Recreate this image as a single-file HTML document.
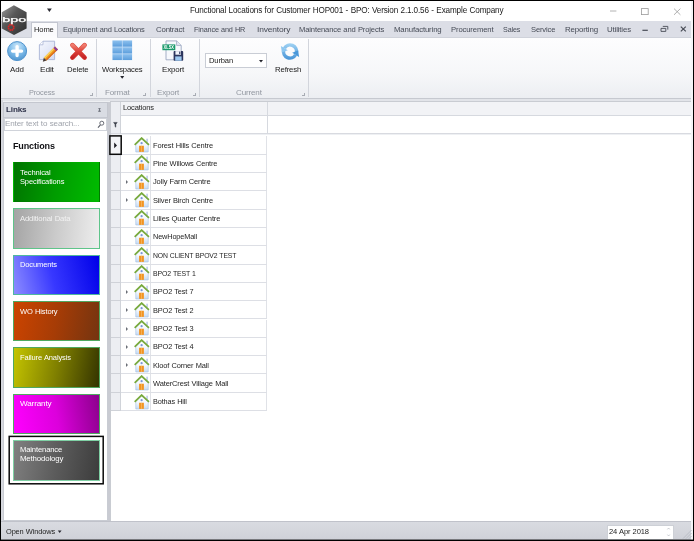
<!DOCTYPE html>
<html><head><meta charset="utf-8"><title>Functional Locations</title>
<style>
*{box-sizing:border-box;margin:0;padding:0}
html,body{width:694px;height:541px;overflow:hidden;background:#000}
body{font-family:"Liberation Sans","DejaVu Sans",sans-serif;font-size:8.3px;color:#1e1e1e;position:relative}
#win{position:absolute;left:1px;top:1px;width:692px;height:538.6px;background:#fff;overflow:hidden}
#pg{position:absolute;left:-1px;top:-1px;width:694px;height:541px}
#pg div,#pg i,#pg span,#pg svg{position:absolute;display:block}
.t{white-space:nowrap;line-height:10px;height:10px;transform-origin:0 0;letter-spacing:-0.15px;word-spacing:0.35px}
#ov{left:0;top:0;width:694px;height:541px;will-change:transform}
#rframe{left:690.8px;top:1px;width:2.2px;height:539px;background:#f4f4f7}
#focusbg{left:110px;top:136px;width:11px;height:18px;background:#f3f4f6}
#bshade{left:0;top:539px;width:694px;height:1px;background:rgba(0,0,0,.42)}
#tabbar{left:1px;top:21.4px;width:692px;height:15.2px;background:#dcdee6}
#home{left:30.8px;top:22.4px;width:27.2px;height:15px;background:#fbfbfd;border:1px solid #c3c6d0;border-bottom:none}
#ribbon{left:1px;top:36.6px;width:692px;height:62px;background:linear-gradient(#fdfdfe 0%,#f6f7f9 60%,#eceef2 100%);border-top:1px solid #cfd2da;border-bottom:1px solid #c6c9d0}
#home2{left:31.8px;top:36px;width:25.2px;height:2px;background:#fcfcfd}
.gcap{top:86.5px;height:11px;background:rgba(228,231,237,.55)}
.gsep{top:39px;width:1px;height:58px;background:#d2d5dc}
.launch{top:93.4px;width:2.8px;height:2.8px;border-right:0.9px solid #a8acb4;border-bottom:0.9px solid #a8acb4}
#gap{left:1px;top:98.6px;width:692px;height:5px;background:linear-gradient(#e2e4e9 0,#e2e4e9 2px,#eef0f3 2px)}
#links{left:3px;top:102px;width:105px;height:419px;background:#fff;border:1px solid #c9ccd3}
#linkshdr{left:3px;top:102px;width:105px;height:16px;background:#d9dce3;border:1px solid #c4c7cf}
#search{left:3.5px;top:118px;width:103.5px;height:12.5px;border:1px solid #d0d3da;background:#fff}
.tile{left:12.9px;width:87.2px;height:40.6px;border:1px solid transparent}
#sel{left:8.5px;top:435.6px;width:95.4px;height:49px;border:1.7px solid #0a0a0a}
#lmargin{left:1px;top:100px;width:2px;height:440px;background:#d6d8de}
#splitter{left:108px;top:102px;width:2px;height:421px;background:#c9cbd2}
#grid{left:110px;top:101px;width:584px;height:422px;background:#fff;border-top:1px solid #c9ccd2;border-left:1px solid #c9ccd2}
#ghdrbg{left:111px;top:102px;width:582px;height:14px;background:#f2f3f6;border-bottom:1px solid #d6d9df}
#indcol{left:111px;top:102px;width:10px;height:309px;background:#eceef2;border-right:1px solid #d0d3d9}
#gfline{left:110.6px;top:133px;width:583px;height:2px;background:linear-gradient(#d8dae0 0,#d8dae0 1px,#eef0f3 1px)}
#gcol{left:266.6px;top:102px;width:1px;height:32px;background:#d6d9df}
#gcol0{left:120.4px;top:102px;width:1px;height:32px;background:#d0d3d9}
.row{left:110.6px;width:156.8px;height:18.33px;border-bottom:1px solid #dddfe5}
.row::before{content:"";position:absolute;left:0;top:0;width:10.4px;height:100%;border-bottom:1px solid #cfd2d8}
.house{left:23.4px;top:0.9px}
.cell{left:39.4px;top:0;width:117.4px;height:100%;border-left:1px solid #e0e2e7;border-right:1px solid #e0e2e7}
.exp{left:15.2px;top:7.2px;width:0;height:0;border-left:2.6px solid #6a6e76;border-top:2px solid transparent;border-bottom:2px solid transparent}
#focus{left:109.2px;top:135.1px;width:12.8px;height:19.7px;border:1.6px solid #0a0a0a;background:#f3f4f6}
#focus i{left:3.2px;top:6.2px;width:0;height:0;border-left:3px solid #222;border-top:2.6px solid transparent;border-bottom:2.6px solid transparent}
#status{left:1px;top:521px;width:692px;height:19px;background:linear-gradient(#d9dbe1,#cfd1d8);border-top:1px solid #c0c2ca}
#date{left:607px;top:524.8px;width:67px;height:15px;background:#fff;border:1px solid #cdd0d6}
#combo{left:205.2px;top:53.3px;width:61.4px;height:15.2px;background:#fff;border:1px solid #c9cdd5}
.dd{width:0;height:0;border-top:2.4px solid #222;border-left:2px solid transparent;border-right:2px solid transparent}
</style></head><body>
<svg width="0" height="0" style="position:absolute"><defs>
<linearGradient id="hw" x1="0" y1="0" x2="0" y2="1"><stop offset="0" stop-color="#ffffff"/><stop offset="0.5" stop-color="#f4f8fd"/><stop offset="1" stop-color="#c6daf2"/></linearGradient>

</defs></svg>
<div id="win"><div id="pg">
<div id="tabbar"></div>
<div id="ribbon"></div>
<div id="home"></div><div id="home2"></div>
<div id="gap"></div>
<!-- group captions + separators -->
<div class="gsep" style="left:96.4px"></div><div class="gsep" style="left:149.6px"></div><div class="gsep" style="left:199.4px"></div><div class="gsep" style="left:308px"></div>
<div class="launch" style="left:90.4px"></div><div class="launch" style="left:143.4px"></div><div class="launch" style="left:193px"></div><div class="launch" style="left:302.4px"></div>
<div id="combo"></div>
<div id="lmargin"></div>
<div id="links"></div>
<div id="linkshdr"></div>
<div id="search"></div>
<div class="tile" style="top:161.7px;background:linear-gradient(100deg,#007400 0%,#009c00 50%,#00bc00 100%);border-color:transparent"></div><div class="tile" style="top:208.1px;background:linear-gradient(95deg,#a4a4a4 0%,#cbcbcb 50%,#eeeeee 100%);border-color:#5fc48a"></div><div class="tile" style="top:254.5px;background:linear-gradient(75deg,#8c8cff 0%,#3838ff 45%,#0000e8 100%);border-color:#4fb8a0"></div><div class="tile" style="top:300.9px;background:linear-gradient(100deg,#cc4400 0%,#a63c06 50%,#743410 100%);border-color:#50a860"></div><div class="tile" style="top:347.3px;background:linear-gradient(100deg,#c4c400 0%,#808000 50%,#343400 100%);border-color:#50a860"></div><div class="tile" style="top:393.7px;background:linear-gradient(80deg,#ff00ff 0%,#dc00dc 50%,#8c008c 100%);border-color:#50a860"></div><div class="tile" style="top:440.1px;background:linear-gradient(100deg,#808080 0%,#5c5c5c 50%,#3c3c3c 100%);border-color:#7fd0a4"></div>
<div id="splitter"></div>
<div id="grid"></div>
<div id="ghdrbg"></div>
<div id="indcol"></div>
<div id="gfline"></div><div id="gcol"></div><div id="gcol0"></div>
<div class="row" style="top:136.20px"><svg class="house" width="16" height="16" viewBox="0 0 17 17"><rect x="13" y="1.8" width="1.9" height="4" fill="#c4d0ea"/><path d="M1.9 8.2 L8.1 2 L15.1 8.2 L15.1 15.9 L1.9 15.9 Z" fill="url(#hw)" stroke="#a9c3e6" stroke-width="0.7"/><rect x="5.4" y="9.3" width="5.1" height="6.5" fill="#f29422"/><path d="M7.95 9.3 V15.8" stroke="#f8c070" stroke-width="0.7"/><circle cx="8.1" cy="6.6" r="1.2" fill="#7a96d6"/><path d="M0.7 8.3 L8.1 1.1 L15.9 8.3" fill="none" stroke="#78aa3c" stroke-width="1.8"/></svg><i class="cell"></i></div>
<div class="row" style="top:154.53px"><svg class="house" width="16" height="16" viewBox="0 0 17 17"><rect x="13" y="1.8" width="1.9" height="4" fill="#c4d0ea"/><path d="M1.9 8.2 L8.1 2 L15.1 8.2 L15.1 15.9 L1.9 15.9 Z" fill="url(#hw)" stroke="#a9c3e6" stroke-width="0.7"/><rect x="5.4" y="9.3" width="5.1" height="6.5" fill="#f29422"/><path d="M7.95 9.3 V15.8" stroke="#f8c070" stroke-width="0.7"/><circle cx="8.1" cy="6.6" r="1.2" fill="#7a96d6"/><path d="M0.7 8.3 L8.1 1.1 L15.9 8.3" fill="none" stroke="#78aa3c" stroke-width="1.8"/></svg><i class="cell"></i></div>
<div class="row" style="top:172.86px"><i class="exp"></i><svg class="house" width="16" height="16" viewBox="0 0 17 17"><rect x="13" y="1.8" width="1.9" height="4" fill="#c4d0ea"/><path d="M1.9 8.2 L8.1 2 L15.1 8.2 L15.1 15.9 L1.9 15.9 Z" fill="url(#hw)" stroke="#a9c3e6" stroke-width="0.7"/><rect x="5.4" y="9.3" width="5.1" height="6.5" fill="#f29422"/><path d="M7.95 9.3 V15.8" stroke="#f8c070" stroke-width="0.7"/><circle cx="8.1" cy="6.6" r="1.2" fill="#7a96d6"/><path d="M0.7 8.3 L8.1 1.1 L15.9 8.3" fill="none" stroke="#78aa3c" stroke-width="1.8"/></svg><i class="cell"></i></div>
<div class="row" style="top:191.19px"><i class="exp"></i><svg class="house" width="16" height="16" viewBox="0 0 17 17"><rect x="13" y="1.8" width="1.9" height="4" fill="#c4d0ea"/><path d="M1.9 8.2 L8.1 2 L15.1 8.2 L15.1 15.9 L1.9 15.9 Z" fill="url(#hw)" stroke="#a9c3e6" stroke-width="0.7"/><rect x="5.4" y="9.3" width="5.1" height="6.5" fill="#f29422"/><path d="M7.95 9.3 V15.8" stroke="#f8c070" stroke-width="0.7"/><circle cx="8.1" cy="6.6" r="1.2" fill="#7a96d6"/><path d="M0.7 8.3 L8.1 1.1 L15.9 8.3" fill="none" stroke="#78aa3c" stroke-width="1.8"/></svg><i class="cell"></i></div>
<div class="row" style="top:209.52px"><svg class="house" width="16" height="16" viewBox="0 0 17 17"><rect x="13" y="1.8" width="1.9" height="4" fill="#c4d0ea"/><path d="M1.9 8.2 L8.1 2 L15.1 8.2 L15.1 15.9 L1.9 15.9 Z" fill="url(#hw)" stroke="#a9c3e6" stroke-width="0.7"/><rect x="5.4" y="9.3" width="5.1" height="6.5" fill="#f29422"/><path d="M7.95 9.3 V15.8" stroke="#f8c070" stroke-width="0.7"/><circle cx="8.1" cy="6.6" r="1.2" fill="#7a96d6"/><path d="M0.7 8.3 L8.1 1.1 L15.9 8.3" fill="none" stroke="#78aa3c" stroke-width="1.8"/></svg><i class="cell"></i></div>
<div class="row" style="top:227.85px"><svg class="house" width="16" height="16" viewBox="0 0 17 17"><rect x="13" y="1.8" width="1.9" height="4" fill="#c4d0ea"/><path d="M1.9 8.2 L8.1 2 L15.1 8.2 L15.1 15.9 L1.9 15.9 Z" fill="url(#hw)" stroke="#a9c3e6" stroke-width="0.7"/><rect x="5.4" y="9.3" width="5.1" height="6.5" fill="#f29422"/><path d="M7.95 9.3 V15.8" stroke="#f8c070" stroke-width="0.7"/><circle cx="8.1" cy="6.6" r="1.2" fill="#7a96d6"/><path d="M0.7 8.3 L8.1 1.1 L15.9 8.3" fill="none" stroke="#78aa3c" stroke-width="1.8"/></svg><i class="cell"></i></div>
<div class="row" style="top:246.18px"><svg class="house" width="16" height="16" viewBox="0 0 17 17"><rect x="13" y="1.8" width="1.9" height="4" fill="#c4d0ea"/><path d="M1.9 8.2 L8.1 2 L15.1 8.2 L15.1 15.9 L1.9 15.9 Z" fill="url(#hw)" stroke="#a9c3e6" stroke-width="0.7"/><rect x="5.4" y="9.3" width="5.1" height="6.5" fill="#f29422"/><path d="M7.95 9.3 V15.8" stroke="#f8c070" stroke-width="0.7"/><circle cx="8.1" cy="6.6" r="1.2" fill="#7a96d6"/><path d="M0.7 8.3 L8.1 1.1 L15.9 8.3" fill="none" stroke="#78aa3c" stroke-width="1.8"/></svg><i class="cell"></i></div>
<div class="row" style="top:264.51px"><svg class="house" width="16" height="16" viewBox="0 0 17 17"><rect x="13" y="1.8" width="1.9" height="4" fill="#c4d0ea"/><path d="M1.9 8.2 L8.1 2 L15.1 8.2 L15.1 15.9 L1.9 15.9 Z" fill="url(#hw)" stroke="#a9c3e6" stroke-width="0.7"/><rect x="5.4" y="9.3" width="5.1" height="6.5" fill="#f29422"/><path d="M7.95 9.3 V15.8" stroke="#f8c070" stroke-width="0.7"/><circle cx="8.1" cy="6.6" r="1.2" fill="#7a96d6"/><path d="M0.7 8.3 L8.1 1.1 L15.9 8.3" fill="none" stroke="#78aa3c" stroke-width="1.8"/></svg><i class="cell"></i></div>
<div class="row" style="top:282.84px"><i class="exp"></i><svg class="house" width="16" height="16" viewBox="0 0 17 17"><rect x="13" y="1.8" width="1.9" height="4" fill="#c4d0ea"/><path d="M1.9 8.2 L8.1 2 L15.1 8.2 L15.1 15.9 L1.9 15.9 Z" fill="url(#hw)" stroke="#a9c3e6" stroke-width="0.7"/><rect x="5.4" y="9.3" width="5.1" height="6.5" fill="#f29422"/><path d="M7.95 9.3 V15.8" stroke="#f8c070" stroke-width="0.7"/><circle cx="8.1" cy="6.6" r="1.2" fill="#7a96d6"/><path d="M0.7 8.3 L8.1 1.1 L15.9 8.3" fill="none" stroke="#78aa3c" stroke-width="1.8"/></svg><i class="cell"></i></div>
<div class="row" style="top:301.17px"><i class="exp"></i><svg class="house" width="16" height="16" viewBox="0 0 17 17"><rect x="13" y="1.8" width="1.9" height="4" fill="#c4d0ea"/><path d="M1.9 8.2 L8.1 2 L15.1 8.2 L15.1 15.9 L1.9 15.9 Z" fill="url(#hw)" stroke="#a9c3e6" stroke-width="0.7"/><rect x="5.4" y="9.3" width="5.1" height="6.5" fill="#f29422"/><path d="M7.95 9.3 V15.8" stroke="#f8c070" stroke-width="0.7"/><circle cx="8.1" cy="6.6" r="1.2" fill="#7a96d6"/><path d="M0.7 8.3 L8.1 1.1 L15.9 8.3" fill="none" stroke="#78aa3c" stroke-width="1.8"/></svg><i class="cell"></i></div>
<div class="row" style="top:319.50px"><i class="exp"></i><svg class="house" width="16" height="16" viewBox="0 0 17 17"><rect x="13" y="1.8" width="1.9" height="4" fill="#c4d0ea"/><path d="M1.9 8.2 L8.1 2 L15.1 8.2 L15.1 15.9 L1.9 15.9 Z" fill="url(#hw)" stroke="#a9c3e6" stroke-width="0.7"/><rect x="5.4" y="9.3" width="5.1" height="6.5" fill="#f29422"/><path d="M7.95 9.3 V15.8" stroke="#f8c070" stroke-width="0.7"/><circle cx="8.1" cy="6.6" r="1.2" fill="#7a96d6"/><path d="M0.7 8.3 L8.1 1.1 L15.9 8.3" fill="none" stroke="#78aa3c" stroke-width="1.8"/></svg><i class="cell"></i></div>
<div class="row" style="top:337.83px"><i class="exp"></i><svg class="house" width="16" height="16" viewBox="0 0 17 17"><rect x="13" y="1.8" width="1.9" height="4" fill="#c4d0ea"/><path d="M1.9 8.2 L8.1 2 L15.1 8.2 L15.1 15.9 L1.9 15.9 Z" fill="url(#hw)" stroke="#a9c3e6" stroke-width="0.7"/><rect x="5.4" y="9.3" width="5.1" height="6.5" fill="#f29422"/><path d="M7.95 9.3 V15.8" stroke="#f8c070" stroke-width="0.7"/><circle cx="8.1" cy="6.6" r="1.2" fill="#7a96d6"/><path d="M0.7 8.3 L8.1 1.1 L15.9 8.3" fill="none" stroke="#78aa3c" stroke-width="1.8"/></svg><i class="cell"></i></div>
<div class="row" style="top:356.16px"><i class="exp"></i><svg class="house" width="16" height="16" viewBox="0 0 17 17"><rect x="13" y="1.8" width="1.9" height="4" fill="#c4d0ea"/><path d="M1.9 8.2 L8.1 2 L15.1 8.2 L15.1 15.9 L1.9 15.9 Z" fill="url(#hw)" stroke="#a9c3e6" stroke-width="0.7"/><rect x="5.4" y="9.3" width="5.1" height="6.5" fill="#f29422"/><path d="M7.95 9.3 V15.8" stroke="#f8c070" stroke-width="0.7"/><circle cx="8.1" cy="6.6" r="1.2" fill="#7a96d6"/><path d="M0.7 8.3 L8.1 1.1 L15.9 8.3" fill="none" stroke="#78aa3c" stroke-width="1.8"/></svg><i class="cell"></i></div>
<div class="row" style="top:374.49px"><svg class="house" width="16" height="16" viewBox="0 0 17 17"><rect x="13" y="1.8" width="1.9" height="4" fill="#c4d0ea"/><path d="M1.9 8.2 L8.1 2 L15.1 8.2 L15.1 15.9 L1.9 15.9 Z" fill="url(#hw)" stroke="#a9c3e6" stroke-width="0.7"/><rect x="5.4" y="9.3" width="5.1" height="6.5" fill="#f29422"/><path d="M7.95 9.3 V15.8" stroke="#f8c070" stroke-width="0.7"/><circle cx="8.1" cy="6.6" r="1.2" fill="#7a96d6"/><path d="M0.7 8.3 L8.1 1.1 L15.9 8.3" fill="none" stroke="#78aa3c" stroke-width="1.8"/></svg><i class="cell"></i></div>
<div class="row" style="top:392.82px"><svg class="house" width="16" height="16" viewBox="0 0 17 17"><rect x="13" y="1.8" width="1.9" height="4" fill="#c4d0ea"/><path d="M1.9 8.2 L8.1 2 L15.1 8.2 L15.1 15.9 L1.9 15.9 Z" fill="url(#hw)" stroke="#a9c3e6" stroke-width="0.7"/><rect x="5.4" y="9.3" width="5.1" height="6.5" fill="#f29422"/><path d="M7.95 9.3 V15.8" stroke="#f8c070" stroke-width="0.7"/><circle cx="8.1" cy="6.6" r="1.2" fill="#7a96d6"/><path d="M0.7 8.3 L8.1 1.1 L15.9 8.3" fill="none" stroke="#78aa3c" stroke-width="1.8"/></svg><i class="cell"></i></div>
<div id="focusbg"></div>
<div id="status"></div>
<div id="date"></div>
<div id="ov">
<div id="rframe"></div>
<div id="bshade"></div>
<svg style="left:0;top:0" width="694" height="541" viewBox="0 0 694 541">
<rect x="9.2" y="436.4" width="94" height="47.4" fill="none" stroke="#0a0a0a" stroke-width="1.5"/>
<rect x="109.9" y="135.9" width="11.3" height="18.4" fill="none" stroke="#0a0a0a" stroke-width="1.5"/>
<path d="M114.2 142.6 L117 145.4 L114.2 148.2 Z" fill="#1c1c22"/>
<path d="M47 8.4 H51.8 L49.4 12 Z" fill="#2a2a32"/>
<path d="M120.2 76 H124.2 L122.2 78.7 Z" fill="#22222a"/>
<path d="M259 60 H263 L261 62.6 Z" fill="#22222a"/>
<path d="M57.8 530.6 H61.6 L59.7 533.1 Z" fill="#2a2a32"/>
</svg>
<!-- logo -->
<svg style="left:0;top:3px" width="30" height="34" viewBox="0 3 30 34">
<defs><linearGradient id="lg1" x1="0" y1="0" x2="1" y2="1"><stop offset="0" stop-color="#9c9c9c"/><stop offset="0.4" stop-color="#585858"/><stop offset="1" stop-color="#2e2e2e"/></linearGradient></defs>
<path d="M13.9 5.2 L26.6 12.3 L26.6 28.4 L14 34.9 L1.8 28.4 L1.8 12.3 Z" fill="url(#lg1)"/>
<circle cx="11.1" cy="27.4" r="2.7" fill="none" stroke="#dc2626" stroke-width="1.7" stroke-dasharray="1.6 0.5"/>
<text x="2.3" y="21.9" font-family="Liberation Sans, sans-serif" font-size="6.8" fill="#ffffff" stroke="#ffffff" stroke-width="0.25" textLength="23.8" lengthAdjust="spacingAndGlyphs">bpo</text>
</svg>
<!-- Add -->
<svg style="left:6px;top:39.6px" width="22" height="22" viewBox="0 0 22 22">
<defs><radialGradient id="ag" cx="0.5" cy="0.25" r="0.8"><stop offset="0" stop-color="#cfe8fa"/><stop offset="0.5" stop-color="#80bdea"/><stop offset="1" stop-color="#4a90cc"/></radialGradient></defs>
<circle cx="11.1" cy="11.1" r="9.5" fill="url(#ag)" stroke="#4f92cc" stroke-width="1"/>
<path d="M11.1 6.6 V15.6 M6.6 11.1 H15.6" stroke="#fff" stroke-width="3.3" stroke-linecap="round" fill="none"/>
</svg>
<!-- Edit -->
<svg style="left:38px;top:39.6px" width="22" height="22" viewBox="0 0 22 22">
<defs><linearGradient id="pg1" x1="0" y1="0" x2="1" y2="1"><stop offset="0" stop-color="#f6f8fe"/><stop offset="1" stop-color="#d3daf2"/></linearGradient></defs>
<path d="M5 1.2 H16.6 V19.6 H1.4 V4.8 Z" fill="url(#pg1)" stroke="#a9b4d6" stroke-width="0.9"/>
<path d="M5 1.2 V4.8 H1.4" fill="#fff" stroke="#a9b4d6" stroke-width="0.8"/>
<path d="M17.0 6.6 L19.9 9.5 L8.6 20.6 L5.8 17.8 Z" fill="#f0981c"/>
<path d="M17.0 6.6 L18.0 7.6 L6.8 18.8 L5.8 17.8 Z" fill="#fbd45c"/>
<path d="M19.0 8.6 L19.9 9.5 L8.6 20.6 L7.7 19.7 Z" fill="#d86a20"/>
<path d="M17.0 6.6 L19.9 9.5 L18.4 11.0 L15.5 8.1 Z" fill="#8a3aa0"/>
<path d="M5.8 17.8 L8.6 20.6 L4.8 21.8 Z" fill="#4a3c34"/>
</svg>
<!-- Delete -->
<svg style="left:68px;top:40.6px" width="21" height="21" viewBox="0 0 21 21">
<defs><linearGradient id="dg" x1="0" y1="0" x2="0" y2="1"><stop offset="0" stop-color="#f07c6e"/><stop offset="0.5" stop-color="#dc4038"/><stop offset="1" stop-color="#c42426"/></linearGradient></defs>
<path d="M4.4 4.2 L16.6 16.6 M16.6 4.2 L4.4 16.6" stroke="#d8483e" stroke-width="4.6" stroke-linecap="round" fill="none"/>
<path d="M4.4 4.2 L16.6 16.6 M16.6 4.2 L4.4 16.6" stroke="url(#dg)" stroke-width="3.6" stroke-linecap="round" fill="none"/>
</svg>
<!-- Workspaces -->
<svg style="left:111.8px;top:40.2px" width="21" height="21" viewBox="0 0 21 21">
<defs><linearGradient id="wg" x1="0" y1="0" x2="0" y2="1"><stop offset="0" stop-color="#8cc0ee"/><stop offset="1" stop-color="#5c9edc"/></linearGradient></defs>
<rect x="0.4" y="0.4" width="19.8" height="19.8" fill="#c2dcf6"/>
<g fill="url(#wg)"><rect x="0.6" y="0.6" width="9.3" height="6"/><rect x="10.7" y="0.6" width="9.3" height="6"/><rect x="0.6" y="7.4" width="9.3" height="6"/><rect x="10.7" y="7.4" width="9.3" height="6"/><rect x="0.6" y="14.2" width="9.3" height="5.8"/><rect x="10.7" y="14.2" width="9.3" height="5.8"/></g>
</svg>
<!-- Export -->
<svg style="left:161px;top:39.6px" width="24" height="22" viewBox="0 0 24 22">
<path d="M5 0.9 H15.6 L20.2 5.4 V19.8 H5 Z" fill="#f6f8fc" stroke="#9aa6c0" stroke-width="0.9"/>
<path d="M15.6 0.9 V5.4 H20.2" fill="#e4e9f4" stroke="#9aa6c0" stroke-width="0.8"/>
<rect x="1.4" y="4.4" width="12.9" height="5.8" fill="#18996a"/>
<text x="2.6" y="8.9" font-family="Liberation Sans, sans-serif" font-size="4.6" font-weight="bold" fill="#ffffff" textLength="10.4" lengthAdjust="spacingAndGlyphs">XLSX</text>
<rect x="12.6" y="11.1" width="9.6" height="9.6" rx="0.8" fill="#2c365e"/>
<rect x="14.4" y="11.1" width="5.6" height="3.6" fill="#f2f4fa"/>
<rect x="14.2" y="16.4" width="6.4" height="4.3" fill="#9cc8f0"/>
<rect x="18.2" y="11.6" width="1.2" height="2.4" fill="#2c365e"/>
</svg>
<!-- Refresh -->
<svg style="left:277.6px;top:40.6px" width="24" height="21" viewBox="0 0 24 21">
<defs><linearGradient id="rg" gradientUnits="userSpaceOnUse" x1="0" y1="1" x2="0" y2="20"><stop offset="0" stop-color="#a8d8f6"/><stop offset="1" stop-color="#3f8ed4"/></linearGradient></defs>
<g fill="none" stroke="url(#rg)" stroke-width="3.5">
<path d="M18.28 12.18 A6.5 6.5 0 0 0 6.37 7.25"/>
<path d="M5.72 8.82 A6.5 6.5 0 0 0 17.63 13.75"/>
</g>
<path d="M2.9 5.0 L9.8 9.2 L3.9 11.6 Z" fill="#8cc6f0"/>
<path d="M21.1 16.0 L14.2 11.8 L20.1 9.4 Z" fill="#4a98da"/>
</svg>
<!-- window controls -->
<svg style="left:606px;top:5px" width="80" height="13" viewBox="606 5 80 13" fill="none">
<path d="M610 11 H616.4" stroke="#a0a0a0" stroke-width="0.8"/>
<rect x="641.6" y="8.6" width="6.6" height="6" stroke="#9a9a9a" stroke-width="0.8"/>
<path d="M674 8.6 L680.4 14.8 M680.4 8.6 L674 14.8" stroke="#9a9a9a" stroke-width="0.8"/>
</svg>
<svg style="left:640px;top:24px" width="50" height="10" viewBox="640 24 50 10" fill="none">
<path d="M642.4 30.3 H647.8" stroke="#484c56" stroke-width="1.2"/>
<path d="M662.8 26.4 H667.8 V29.6 M661 28.4 H665.8 V31.4 H661 Z" stroke="#484c56" stroke-width="0.9"/>
<path d="M680.8 26.6 L685.8 31.4 M685.8 26.6 L680.8 31.4" stroke="#484c56" stroke-width="1.2"/>
</svg>
<!-- pin + magnifier + filter -->
<svg style="left:96px;top:106px" width="10" height="24" viewBox="96 106 10 24" fill="none">
<path d="M98.4 108.6 H100.6 M99.5 108.6 V111.6 M98 111.2 H101" stroke="#6a6e78" stroke-width="0.9"/>
<circle cx="101.8" cy="123.2" r="2" stroke="#5a5e68" stroke-width="0.9"/>
<path d="M100.4 124.8 L98 127.6" stroke="#5a5e68" stroke-width="1.1"/>
</svg>
<svg style="left:112px;top:120px" width="8" height="9" viewBox="112 120 8 9">
<path d="M113.6 122.4 H117.2 L115.8 124.4 V127.2 L115 126.6 V124.4 Z" fill="#3a3e48" stroke="#3a3e48" stroke-width="0.5"/>
</svg>
<!-- spin + grip -->
<svg style="left:664px;top:524px" width="30" height="16" viewBox="664 524 30 16" fill="none">
<path d="M667.4 529.4 L668.6 528 L669.8 529.4 M667.4 534.6 L668.6 536 L669.8 534.6" stroke="#b4b8c0" stroke-width="0.7"/>
<path d="M691.6 530 L683 538.6 M691.6 533 L686 538.6 M691.6 536 L689 538.6" stroke="#b8bcc4" stroke-width="0.9"/>
</svg>

<span class="t" style="left:190.35px;top:5.09px;font-size:8.4px;transform:scaleX(0.9730);color:#1a1a1a;">Functional Locations for Customer HOP001 - BPO: Version 2.1.0.56 - Example Company</span>
<span class="t" style="left:33.55px;top:25.16px;font-size:7.9px;transform:scaleX(0.9610);color:#1e1e1e;">Home</span>
<span class="t" style="left:63.35px;top:25.16px;font-size:7.9px;transform:scaleX(0.9461);color:#464b56;">Equipment and Locations</span>
<span class="t" style="left:155.85px;top:25.16px;font-size:7.9px;transform:scaleX(0.9870);color:#464b56;">Contract</span>
<span class="t" style="left:194.25px;top:25.16px;font-size:7.9px;transform:scaleX(0.9198);color:#464b56;">Finance and HR</span>
<span class="t" style="left:256.85px;top:25.16px;font-size:7.9px;transform:scaleX(1.0685);color:#464b56;">Inventory</span>
<span class="t" style="left:299.25px;top:25.16px;font-size:7.9px;transform:scaleX(0.9650);color:#464b56;">Maintenance and Projects</span>
<span class="t" style="left:394.35px;top:25.16px;font-size:7.9px;transform:scaleX(0.9894);color:#464b56;">Manufacturing</span>
<span class="t" style="left:451.05px;top:25.16px;font-size:7.9px;transform:scaleX(0.9752);color:#464b56;">Procurement</span>
<span class="t" style="left:503.35px;top:25.16px;font-size:7.9px;transform:scaleX(0.9086);color:#464b56;">Sales</span>
<span class="t" style="left:530.55px;top:25.16px;font-size:7.9px;transform:scaleX(0.9600);color:#464b56;">Service</span>
<span class="t" style="left:564.55px;top:25.16px;font-size:7.9px;transform:scaleX(1.0023);color:#464b56;">Reporting</span>
<span class="t" style="left:606.75px;top:25.16px;font-size:7.9px;transform:scaleX(0.9941);color:#464b56;">Utilities</span>
<span class="t" style="left:9.55px;top:64.56px;font-size:7.9px;transform:scaleX(1.0114);color:#1a1a1a;">Add</span>
<span class="t" style="left:40.45px;top:64.56px;font-size:7.9px;transform:scaleX(1.0570);color:#1a1a1a;">Edit</span>
<span class="t" style="left:66.55px;top:64.56px;font-size:7.9px;transform:scaleX(0.9786);color:#1a1a1a;">Delete</span>
<span class="t" style="left:101.85px;top:64.56px;font-size:7.9px;transform:scaleX(0.9706);color:#1a1a1a;">Workspaces</span>
<span class="t" style="left:162.15px;top:64.56px;font-size:7.9px;transform:scaleX(1.0065);color:#1a1a1a;">Export</span>
<span class="t" style="left:275.15px;top:64.56px;font-size:7.9px;transform:scaleX(0.9871);color:#1a1a1a;">Refresh</span>
<span class="t" style="left:29.15px;top:87.76px;font-size:7.9px;transform:scaleX(0.9378);color:#9297a0;">Process</span>
<span class="t" style="left:104.85px;top:87.76px;font-size:7.9px;transform:scaleX(1.0188);color:#9297a0;">Format</span>
<span class="t" style="left:157.05px;top:87.76px;font-size:7.9px;transform:scaleX(1.0111);color:#9297a0;">Export</span>
<span class="t" style="left:235.55px;top:87.76px;font-size:7.9px;transform:scaleX(1.0191);color:#9297a0;">Current</span>
<span class="t" style="left:208.55px;top:55.86px;font-size:7.9px;transform:scaleX(0.9588);color:#1a1a1a;">Durban</span>
<span class="t" style="left:5.75px;top:105.03px;font-size:8.0px;transform:scaleX(1.0145);color:#2c3048;font-weight:bold;">Links</span>
<span class="t" style="left:5.45px;top:119.26px;font-size:7.9px;transform:scaleX(1.0225);color:#a0a4ac;">Enter text to search...</span>
<span class="t" style="left:12.75px;top:140.74px;font-size:9.4px;transform:scaleX(0.9632);color:#101014;font-weight:bold;">Functions</span>
<span class="t" style="left:20.45px;top:167.53px;font-size:7.7px;transform:scaleX(0.9918);color:#ffffff;">Technical</span>
<span class="t" style="left:20.45px;top:176.63px;font-size:7.7px;transform:scaleX(0.9760);color:#ffffff;">Specifications</span>
<span class="t" style="left:20.45px;top:213.73px;font-size:7.7px;transform:scaleX(1.0020);color:#f2f2f2;">Additional Data</span>
<span class="t" style="left:20.45px;top:260.13px;font-size:7.7px;transform:scaleX(0.9819);color:#ffffff;">Documents</span>
<span class="t" style="left:20.45px;top:306.53px;font-size:7.7px;transform:scaleX(0.9820);color:#ffffff;">WO History</span>
<span class="t" style="left:20.45px;top:352.93px;font-size:7.7px;transform:scaleX(0.9818);color:#ffffff;">Failure Analysis</span>
<span class="t" style="left:20.45px;top:399.33px;font-size:7.7px;transform:scaleX(1.0619);color:#ffffff;">Warranty</span>
<span class="t" style="left:20.35px;top:445.33px;font-size:7.7px;transform:scaleX(0.9947);color:#ffffff;">Maintenance</span>
<span class="t" style="left:20.35px;top:454.33px;font-size:7.7px;transform:scaleX(1.0182);color:#ffffff;">Methodology</span>
<span class="t" style="left:123.35px;top:103.16px;font-size:7.9px;transform:scaleX(0.9544);color:#1e1e1e;">Locations</span>
<span class="t" style="left:153.15px;top:140.66px;font-size:7.9px;transform:scaleX(0.9489);color:#1e1e1e;">Forest Hills Centre</span>
<span class="t" style="left:153.15px;top:158.99px;font-size:7.9px;transform:scaleX(0.9402);color:#1e1e1e;">Pine Willows Centre</span>
<span class="t" style="left:153.15px;top:177.32px;font-size:7.9px;transform:scaleX(0.9509);color:#1e1e1e;">Jolly Farm Centre</span>
<span class="t" style="left:153.15px;top:195.65px;font-size:7.9px;transform:scaleX(0.9421);color:#1e1e1e;">Silver Birch Centre</span>
<span class="t" style="left:153.15px;top:213.98px;font-size:7.9px;transform:scaleX(0.9559);color:#1e1e1e;">Lilies Quarter Centre</span>
<span class="t" style="left:153.15px;top:232.31px;font-size:7.9px;transform:scaleX(0.9282);color:#1e1e1e;">NewHopeMall</span>
<span class="t" style="left:153.15px;top:250.64px;font-size:7.9px;transform:scaleX(0.8649);color:#1e1e1e;">NON CLIENT BPOV2 TEST</span>
<span class="t" style="left:153.15px;top:268.97px;font-size:7.9px;transform:scaleX(0.8770);color:#1e1e1e;">BPO2 TEST 1</span>
<span class="t" style="left:153.15px;top:287.30px;font-size:7.9px;transform:scaleX(0.9342);color:#1e1e1e;">BPO2 Test 7</span>
<span class="t" style="left:153.15px;top:305.63px;font-size:7.9px;transform:scaleX(0.9342);color:#1e1e1e;">BPO2 Test 2</span>
<span class="t" style="left:153.15px;top:323.96px;font-size:7.9px;transform:scaleX(0.9342);color:#1e1e1e;">BPO2 Test 3</span>
<span class="t" style="left:153.15px;top:342.29px;font-size:7.9px;transform:scaleX(0.9342);color:#1e1e1e;">BPO2 Test 4</span>
<span class="t" style="left:153.15px;top:360.62px;font-size:7.9px;transform:scaleX(0.9433);color:#1e1e1e;">Kloof Corner Mall</span>
<span class="t" style="left:153.15px;top:378.95px;font-size:7.9px;transform:scaleX(0.9509);color:#1e1e1e;">WaterCrest Village Mall</span>
<span class="t" style="left:153.15px;top:397.28px;font-size:7.9px;transform:scaleX(0.9269);color:#1e1e1e;">Bothas Hill</span>
<span class="t" style="left:5.55px;top:526.56px;font-size:7.9px;transform:scaleX(0.9404);color:#1e1e1e;">Open Windows</span>
<span class="t" style="left:609.45px;top:527.16px;font-size:7.9px;transform:scaleX(0.9579);color:#1e1e1e;">24 Apr 2018</span>
</div>
</div></div>
</body></html>
